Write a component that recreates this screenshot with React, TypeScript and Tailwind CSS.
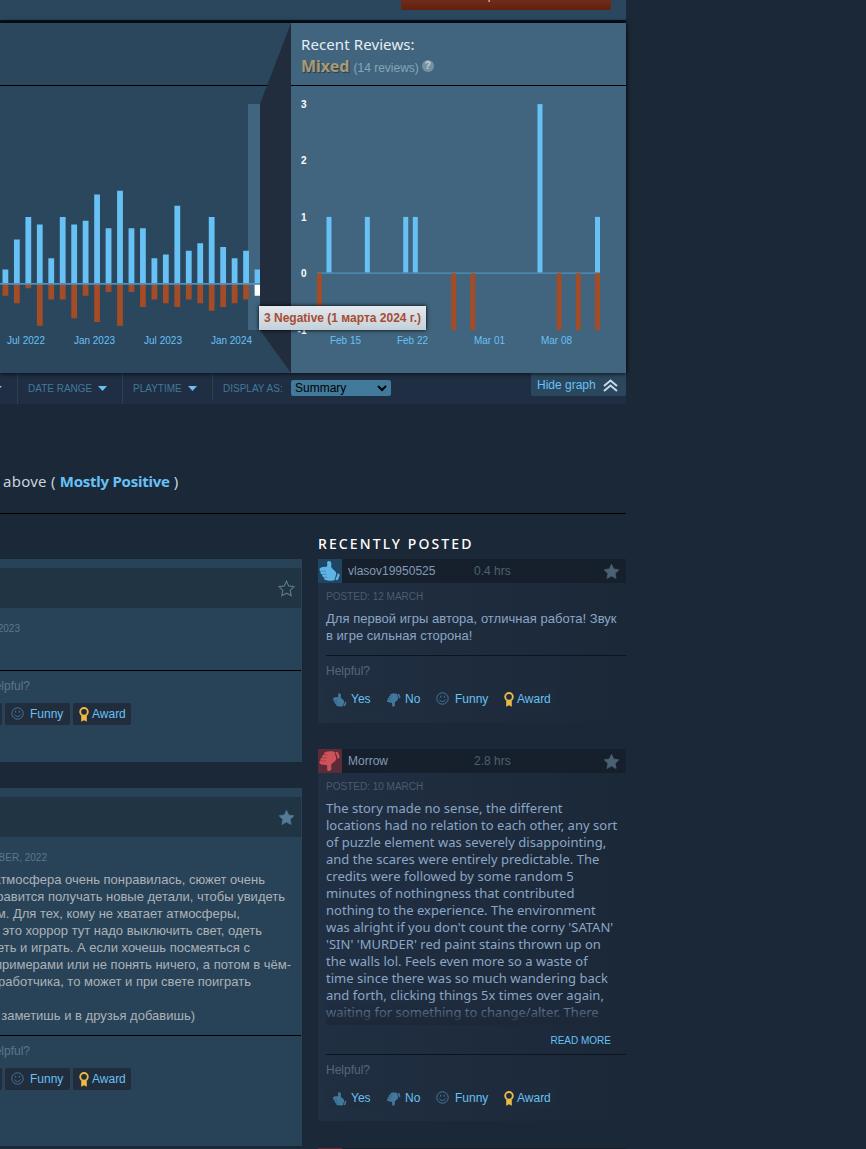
import React from "react";

const positive = [4, 12, 18, 16, 7, 18, 16, 17, 24, 15, 25, 15, 15, 7, 8, 21, 9, 11, 18, 10, 7, 9, 4];
const negative = [3, 5, 1, 11, 4, 4, 9, 3, 10, 2, 11, 2, 6, 4, 5, 6, 4, 5, 7, 6, 5, 4, 3];
const recentUp = [[1, 1], [5, 1], [9, 1], [10, 1], [23, 3], [29, 1]];
const recentDown = [0, 14, 16, 25, 27, 29];

function Thumb({ className = "" }: { className?: string }) {
  return (
    <svg viewBox="0 0 24 24" className={className} fill="currentColor">
      <path d="M10.200 2c1.700-.5 3.200.8 3.200 2.700 0 1.600-.5 2.600-.1 3.600.9 1.900 3.600 3 4.700 5 .3.600.3 1.200.1 1.900l-1.300 5c-.2.700-.6 1-1.300 1.200-2.600.6-5.800.5-7.900-.3-1.400-.6-1.800-1.700-1.300-2.700-1.600-.2-2.500-1.500-1.900-2.900-1.600-.3-2.400-1.800-1.700-3.100-1.400-.7-1.700-2.500-.5-3.500 1.500-1.100 4.300-1 6.700-1.100.6-1.500.3-2.500.2-3.800 0-.9.400-1.700 1.100-2z" />
      <path d="M19.400 14.500l2.200.6c0 2-.8 4.300-2.100 6.100l-2.300-.4c1.200-1.900 1.900-4 2.200-6.300z" />
      <path d="M3.300 12.100h4.500M4.600 15.200h4M6.400 18.200h3" stroke="#0b2236" strokeOpacity=".4" strokeWidth=".7" fill="none" />
    </svg>
  );
}

function Smile() {
  return (
    <svg viewBox="0 0 13 13" className="h-[13px] w-[13px] shrink-0" fill="none" stroke="#41799c">
      <circle cx="6.500" cy="6.500" r="5.700" />
      <path d="M3.500 7.500c.8 2.600 5.200 2.600 6 0M4.700 3.700v2M8.300 3.700v2" />
    </svg>
  );
}

function Ribbon() {
  return (
    <svg viewBox="0 0 10 15" className="h-[15px] w-[10px] shrink-0">
      <circle cx="5" cy="4.800" r="3.800" fill="none" stroke="#e9bb45" strokeWidth="1.900" />
      <path d="M2.200 9h5.600v5.800L5 13.200l-2.800 1.600z" fill="#e9bb45" />
    </svg>
  );
}

function Star({ outline = false, className }: { outline?: boolean; className: string }) {
  return (
    <svg viewBox="0 0 17 17" className={className} fill={outline ? "none" : "currentColor"} stroke="currentColor" strokeWidth={outline ? 1.2 : 0.6}>
      <path d="M8.500 1.200l2.200 4.700 5.200.8-3.700 3.700.9 5.200-4.600-2.500-4.600 2.500.9-5.200L1.100 6.700l5.200-.8z" />
    </svg>
  );
}

function Caret() {
  return (
    <svg viewBox="0 0 9 5" className="h-[5px] w-[9px]">
      <path d="M0 0h9L4.500 5z" fill="#66c0f4" />
    </svg>
  );
}

function Votes({ solid = false }: { solid?: boolean }) {
  const box = solid ? "bg-[#212c3d]" : "bg-[#212c3d]/40";
  const last = solid ? "pl-[6px]" : "pl-[7px]";
  const funny = solid ? "pl-[6px]" : "pl-[7px]";
  return (
    <div className="flex h-[22px] gap-[3px] text-[12px] leading-[22px] text-[#67c1f5]">
      <div className={`flex w-[51px] shrink-0 rounded-[2px] pl-[6px] ${box}`}>
        <Thumb className="mt-[4px] mr-[3px] h-4 w-4 shrink-0 text-[#41799c]" /><span className="pt-px leading-[21px]">Yes</span>
      </div>
      <div className={`flex w-[46px] shrink-0 rounded-[2px] pl-[6px] ${box}`}>
        <Thumb className="mt-[4px] mr-[3px] h-4 w-4 shrink-0 -scale-y-100 text-[#41799c]" /><span className="pt-px leading-[21px]">No</span>
      </div>
      <div className={`flex w-[65px] shrink-0 rounded-[2px] ${funny} ${box}`}>
        <span className="mt-[4px] mr-[6px]"><Smile /></span><span className="pt-px leading-[21px]">Funny</span>
      </div>
      <div className={`flex w-[58px] shrink-0 rounded-[2px] ${last} ${box}`}>
        <span className="mt-[4px] mr-[3px]"><Ribbon /></span><span className="pt-px leading-[21px]">Award</span>
      </div>
    </div>
  );
}

function HistoryChart() {
  return (
    <svg viewBox="0 0 291 350" className="h-[350px] w-[291px] shrink-0 bg-[#2b475d]">
      <defs>
        <clipPath id="range"><rect x="0" y="0" width="260" height="350" /></clipPath>
      </defs>
      <rect x="0" y="62" width="291" height="1" fill="#000" />
      <path d="M291 0L260 81v226l31 43z" fill="#212c3d" />
      <rect x="248" y="81" width="12" height="226" fill="#41657e" />
      <g clipPath="url(#range)">
        {positive.map((v, i) => (
          <rect key={i} x={2.5 + i * 11.46} y={261.5 - v * 3.75} width="5.800" height={v * 3.75} fill="#67c1f5" />
        ))}
        {negative.map((v, i) => (
          <rect key={i} x={2.5 + i * 11.46} y="261.500" width="5.800" height={v * 3.75} fill={i === 22 ? "#fff" : "#a34c25"} />
        ))}
        <rect x="0" y="260" width="260" height="1.700" fill="#5391b9" />
      </g>
      <g fill="#67c1f5" fontFamily="Liberation Sans, sans-serif" fontSize="10" textAnchor="middle">
        <text x="26" y="321" textLength="38">Jul 2022</text>
        <text x="94.500" y="321" textLength="41">Jan 2023</text>
        <text x="163" y="321" textLength="38">Jul 2023</text>
        <text x="231.500" y="321" textLength="41">Jan 2024</text>
      </g>
    </svg>
  );
}

function RecentChart() {
  return (
    <svg viewBox="0 0 335 287" className="block h-[287px] w-[335px]">
      {recentUp.map(([d, v]) => (
        <rect key={d} x={25.9 + d * 9.59} y={187.3 - v * 56.4} width="5" height={v * 56.4} fill="#67c1f5" />
      ))}
      <rect x="26" y="186.300" width="283" height="1.700" fill="#4a86ae" />
      {recentDown.map((d) => (
        <rect key={d} x={25.9 + d * 9.59} y="187.300" width="5" height="56.600" fill="#a34c25" />
      ))}
      <g fill="#fff" fontFamily="Liberation Sans, sans-serif" fontSize="10" fontWeight="700" textAnchor="end">
        <text x="15.500" y="22">3</text>
        <text x="15.500" y="78">2</text>
        <text x="15.500" y="135">1</text>
        <text x="15.500" y="191">0</text>
        <text x="15.500" y="248">-1</text>
      </g>
      <g fill="#67c1f5" fontFamily="Liberation Sans, sans-serif" fontSize="10" textAnchor="middle">
        <text x="54.500" y="258" textLength="31">Feb 15</text>
        <text x="121.500" y="258" textLength="31">Feb 22</text>
        <text x="198.500" y="258" textLength="31">Mar 01</text>
        <text x="265.500" y="258" textLength="31">Mar 08</text>
      </g>
    </svg>
  );
}

function PostHeader({ name, hours, down = false }: { name: string; hours: string; down?: boolean }) {
  return (
    <div className="flex h-6 items-center bg-[#16202c] text-[12px] leading-6">
      <div className={`flex h-6 w-6 items-center justify-center ${down ? "bg-[#5a2c38] text-[#cf5258]" : "bg-[#1f4562] text-[#5fb4e6]"}`}>
        <Thumb className={`h-6 w-6 ${down ? "-scale-y-100" : ""}`} />
      </div>
      <span className="ml-[6px] w-[126px] text-[#8499b5]">{name}</span>
      <span className="text-[#4d6073]">{hours}</span>
      <Star className="mr-[6px] ml-auto h-[17px] w-[17px] text-[#4a6274]" />
    </div>
  );
}

const longReview = [
  ["Отличная атмосфера, атмосфера очень понравилась, сюжет очень", "w-[265px]"],
  ["интересный, нравится получать новые детали, чтобы увидеть", "w-[285px]"],
  ["целиком. Для тех, кому не хватает атмосферы,", "w-[240px]"],
  ["это хоррор тут надо выключить свет, одеть", "w-[262px]"],
  ["наушники, сидеть и играть. А если хочешь посмеяться с", "w-[250px]"],
  ["примерами или не понять ничего, а потом в чём-", "w-[291px]"],
  ["разработчика, то может и при свете поиграть", "w-[251px]"],
  ["", "w-[251px]"],
  ["заметишь и в друзья добавишь)", "w-[195px]"],
];

const story = [
  "The story made no sense, the different",
  "locations had no relation to each other, any sort",
  "of puzzle element was severely disappointing,",
  "and the scares were entirely predictable. The",
  "credits were followed by some random 5",
  "minutes of nothingness that contributed",
  "nothing to the experience. The environment",
  "was alright if you don't count the corny 'SATAN'",
  "'SIN' 'MURDER' red paint stains thrown up on",
  "the walls lol. Feels even more so a waste of",
  "time since there was so much wandering back",
  "and forth, clicking things 5x times over again,",
  "waiting for something to change/alter. There",
];

export default function App() {
  return (
    <div className="h-[1149px] w-[866px] overflow-hidden bg-[#1b2838] font-['Liberation_Sans',sans-serif]">
      <div className="w-[626px]">
        <div className="flex h-5 justify-end bg-[#2b475d] pr-[15px]">
          <div className="relative h-[10px] w-[210px] overflow-hidden rounded-b-[2px] bg-linear-to-b from-[#6e2c1b] to-[#64200f]">
            <span className="absolute top-[-13px] left-[51px] text-[12px] leading-4 whitespace-nowrap text-[#e8c9bd]">View updates</span>
          </div>
        </div>
        <div className="h-[3px] bg-[#06131d]" />
        <div className="relative flex h-[350px] shadow-[0_0_5px_#000]">
          <HistoryChart />
          <div className="w-[335px] bg-[#41657e]">
            <div className="h-[63px] border-b border-black pt-[10px] pl-[10px]">
              <div className="font-['Noto_Sans',sans-serif] text-[15px] leading-[22px] tracking-[0.1px] text-[#e5edf2]">Recent Reviews:</div>
              <div className="flex h-[22px] items-center">
                <span className="font-['Noto_Sans',sans-serif] text-[16px] leading-[22px] font-bold text-[#a99a75] [text-shadow:1px_1px_1px_#0006]">Mixed</span>
                <span className="mt-[3px] ml-[4px] text-[12px] text-[#85a5ba]">(14 reviews)</span>
                <span className="ml-[3px] flex h-3 w-3 items-center justify-center rounded-full bg-[#7592a4] text-[10px] leading-3 font-bold text-[#c2d2dd]">?</span>
              </div>
            </div>
            <RecentChart />
          </div>
          <div className="absolute top-[283px] left-[259px] z-10 h-6 w-[167px] bg-linear-to-b from-[#e3e8ee] to-[#c4d1da] text-center text-[12px] leading-6 font-bold whitespace-nowrap text-[#a84c30] shadow-[0_0_4px_#000]">
            3 Negative (1 марта 2024 г.)
          </div>
        </div>
        <div className="flex h-[31px] bg-[#1f2e42] text-[10px] leading-[31px] text-[#41799c]">
          <div className="flex w-[17px] items-center"><span className="-ml-[7px]"><Caret /></span></div>
          <div className="flex w-[105px] items-center gap-[6px] border-l border-[#2c4055] pl-[10px]"><span>DATE RANGE</span><Caret /></div>
          <div className="flex w-[90px] items-center gap-[6px] border-l border-[#2c4055] pl-[10px]"><span>PLAYTIME</span><Caret /></div>
          <div className="h-[27px] w-[79px] border-l border-[#2c4055] pl-[10px] whitespace-nowrap">DISPLAY AS:</div>
          <div className="mt-[7px] flex h-4 w-[100px] items-center justify-between rounded-[2px] bg-[#417a9b] pr-1 pl-[4px] text-[12px] leading-4 text-black">
            <span>Summary</span>
            <svg viewBox="0 0 10 7" className="h-[7px] w-[10px]" fill="none" stroke="#000" strokeWidth="2"><path d="M1 1l4 4 4-4" /></svg>
          </div>
          <div className="ml-auto flex h-[23px] w-[95px] justify-between rounded-b-[2px] bg-[#2b475d] pr-2 pl-[6px] text-[12px] leading-[24px] text-[#67c1f5]">
            <span className="pt-px leading-[23px]">Hide graph</span>
            <svg viewBox="0 0 15 13" className="mt-[6px] h-[13px] w-[15px]" fill="none" stroke="#c9dae6" strokeWidth="2"><path d="M1 7l6.500-5.500L14 7M1 12l6.500-5.500L14 12" /></svg>
          </div>
        </div>
        <div className="h-[110px] border-b border-black pt-[66px] pl-[3px] font-['Noto_Sans',sans-serif] text-[15px] leading-[22px] text-[#c6d4df]">
          <span className="tracking-[0.25px]">above ( </span><span className="font-bold tracking-[-0.25px] text-[#67c1f5]">Mostly Positive</span> )
        </div>
        <div className="flex gap-4">
          <div className="w-[302px] shrink-0 pt-[45px]">
            <div className="h-[203px] bg-[#284257] pt-[9px]">
              <div className="flex h-10 w-[301px] items-center justify-end bg-[#203444] pr-[6px]"><Star outline className="h-[17px] w-[17px] text-[#56768d]" /></div>
              <div className="flex h-[63px] w-[301px] border-b border-black pt-[15px]">
                <div className="flex w-[20px] justify-end text-[10px] leading-3 whitespace-nowrap text-[#5e768a]">POSTED: 10 JUNE, 2023</div>
              </div>
              <div className="flex w-[30px] justify-end pt-2 text-[12px] leading-[14px] whitespace-nowrap text-[#5f7689]">Helpful?</div>
              <div className="mt-[10px] -ml-[98px]"><Votes solid /></div>
            </div>
            <div className="mt-[26px] h-[358px] bg-[#284257] pt-[9px]">
              <div className="flex h-10 w-[301px] items-center justify-end bg-[#203444] pr-[6px]"><Star className="h-[17px] w-[17px] text-[#537a97]" /></div>
              <div className="h-[199px] w-[301px] border-b border-black pt-[15px]">
                <div className="mb-[7px] flex w-[47px] justify-end text-[10px] leading-3 whitespace-nowrap text-[#5e768a]">POSTED: 10 NOVEMBER, 2022</div>
                {longReview.map(([t, w], i) => (
                  <div key={i} className={`flex h-[17px] justify-end text-[13px] leading-[17px] whitespace-nowrap text-[#acb2b8] ${w}`}>{t}</div>
                ))}
              </div>
              <div className="flex w-[30px] justify-end pt-2 text-[12px] leading-[14px] whitespace-nowrap text-[#5f7689]">Helpful?</div>
              <div className="mt-[10px] -ml-[98px]"><Votes solid /></div>
            </div>
          </div>
          <div className="w-[308px] shrink-0 pt-[19px]">
            <div className="h-[26px] font-['Noto_Sans',sans-serif] text-[14px] leading-[22px] font-medium tracking-[2.1px] text-white">RECENTLY POSTED</div>
            <PostHeader name="vlasov19950525" hours="0.4 hrs" />
            <div className="mb-[26px] h-[140px] bg-linear-to-r from-[#212f43] to-[#1b2838] pt-[8px] pl-2">
              <div className="text-[10px] leading-3 text-[#4c5c70]">POSTED: 12 MARCH</div>
              <div className="mt-[7px] h-[46px] border-b border-[#0c151f] text-[13px] leading-[17px] tracking-[0.03px] whitespace-nowrap text-[#8ba6c4]">
                Для первой игры автора, отличная работа! Звук<br />в игре сильная сторона!
              </div>
              <div className="pt-2 pb-[10px] text-[12px] leading-[14px] text-[#56667a]">Helpful?</div>
              <Votes />
            </div>
            <PostHeader name="Morrow" hours="2.8 hrs" down />
            <div className="mb-[27px] h-[348px] bg-linear-to-r from-[#212f43] to-[#1b2838] pt-[8px] pl-2">
              <div className="text-[10px] leading-3 text-[#4c5c70]">POSTED: 10 MARCH</div>
              <div className="relative mt-[7px] h-[225px] font-['Noto_Sans',sans-serif] text-[13px] leading-[17px] tracking-[0.015px] whitespace-nowrap text-[#8ba6c4]">
                {story.map((l) => <div key={l}>{l}</div>)}
                <div className="absolute bottom-0 left-0 h-[26px] w-full bg-linear-to-b from-[#1c2838]/0 to-[#1c2838]" />
              </div>
              <div className="flex h-[30px] justify-end border-b border-[#0c151f] pr-[15px] text-[10px] leading-[31px] text-[#67c1f5]">READ MORE</div>
              <div className="pt-2 pb-[10px] text-[12px] leading-[14px] text-[#56667a]">Helpful?</div>
              <Votes />
            </div>
            <PostHeader name="" hours="" down />
          </div>
        </div>
      </div>
    </div>
  );
}
